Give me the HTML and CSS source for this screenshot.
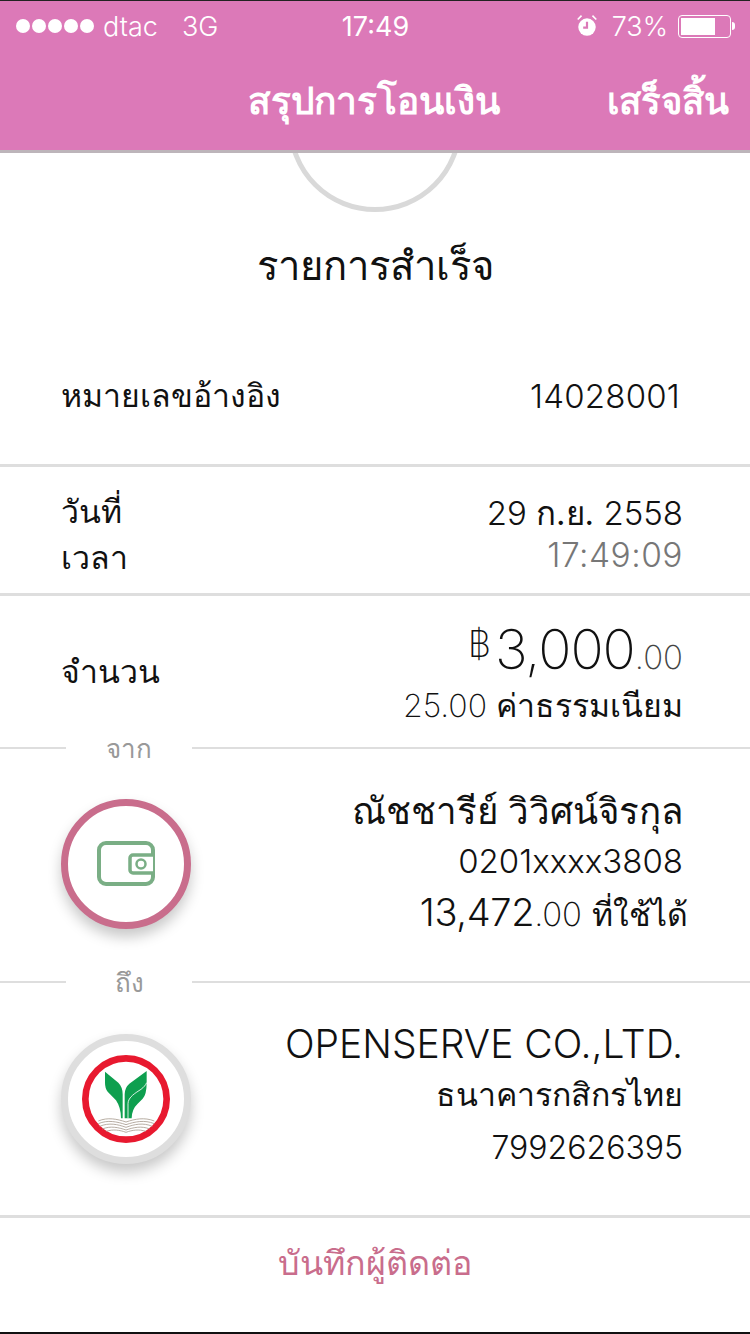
FILE: index.html
```html
<!DOCTYPE html>
<html lang="th">
<head>
<meta charset="utf-8">
<title>สรุปการโอนเงิน</title>
<link rel="stylesheet" href="styles.css">
</head>
<body>
<div class="screen">
  <header class="header">
    <div class="status">
      <div class="status-left">
        <span class="dots"><i></i><i></i><i></i><i></i><i></i></span>
        <span class="carrier">dtac</span>
        <span class="net">3G</span>
      </div>
      <div class="status-time">17:49</div>
      <div class="status-right">
        <svg class="alarm" width="22" height="24" viewBox="0 0 20 22"><circle cx="10" cy="12" r="8" fill="#fff"/><path d="M10 7v5.500H6.500" fill="none" stroke="#dc79b8" stroke-width="2"/><path d="M1.500 5 5 1.500M18.500 5 15 1.500" stroke="#fff" stroke-width="1.500"/></svg>
        <span class="pct">73%</span>
        <span class="battery"><span class="battery-fill"></span></span>
        <span class="battery-tip"></span>
      </div>
    </div>
    <div class="nav">
      <div class="nav-title">สรุปการโอนเงิน</div>
      <div class="nav-done">เสร็จสิ้น</div>
    </div>
  </header>
  <div class="arc-wrap"><div class="arc"></div></div>
  <h1 class="title">รายการสำเร็จ</h1>
  <section class="row row-ref">
    <div class="label">หมายเลขอ้างอิง</div>
    <div class="num">14028001</div>
  </section>
  <section class="row row-date">
    <div class="stack">
      <div class="label">วันที่</div>
      <div class="label">เวลา</div>
    </div>
    <div class="stack right">
      <div class="num date">29 <span class="thai">ก.ย.</span> 2558</div>
      <div class="num time">17:49:09</div>
    </div>
  </section>
  <section class="row row-amount">
    <div class="label">จำนวน</div>
    <div class="stack right">
      <div class="amount"><span class="baht">฿</span><span class="big">3,000</span><span class="cents">.00</span></div>
      <div class="fee"><span class="fee-num">25.00</span> ค่าธรรมเนียม</div>
    </div>
  </section>
  <div class="divider"><span class="line-l"></span><span class="div-label">จาก</span><span class="line-r"></span></div>
  <section class="party party-from">
    <div class="avatar avatar-pink">
      <svg width="60" height="48" viewBox="0 0 60 48"><rect x="3" y="3" width="54" height="41" rx="7" fill="none" stroke="#7aae85" stroke-width="4"/><path d="M57 15H37a3 3 0 0 0-3 3v12a3 3 0 0 0 3 3h20" fill="#fff" stroke="#7aae85" stroke-width="3.500"/><circle cx="45" cy="24" r="4.500" fill="none" stroke="#7aae85" stroke-width="2.500"/></svg>
    </div>
    <div class="info">
      <div class="name">ณัชชารีย์ วิวิศน์จิรกุล</div>
      <div class="line2">0201xxxx3808</div>
      <div class="line3">13,472<span class="small-cents">.00</span> <span class="avail">ที่ใช้ได้</span></div>
    </div>
  </section>
  <div class="divider"><span class="line-l"></span><span class="div-label">ถึง</span><span class="line-r"></span></div>
  <section class="party party-to">
    <div class="avatar avatar-gray">
      <svg width="88" height="88" viewBox="123 122 264 264">
        <circle cx="255" cy="254" r="122" fill="#fff" stroke="#e8192f" stroke-width="20"/>
        <path d="M192 172L232 205Q245 218 245 240V312H240Q240 280 225 258L200 232Q192 222 192 205Z" fill="#0e9f4f"/>
        <path d="M317 170L265 208Q251 220 251 240V312H272Q272 285 290 268L305 253Q317 240 317 205Z" fill="#0e9f4f"/>
        <path d="M261 312V268C261 248 285 235 300 225 308 219 314 212 317 205" fill="none" stroke="#fff" stroke-width="2.500"/>
        <g fill="none" stroke="#a89c90" stroke-width="2.500">
          <path d="M172 320c28-12 56-6 83 3 27-9 55-15 85-3"/>
          <path d="M172 328c28-12 56-6 83 3 27-9 55-15 85-3"/>
          <path d="M176 336c28-12 54-6 79 3 25-9 51-15 79-3"/>
          <path d="M184 344c24-10 48-5 71 3 23-8 47-13 71-3"/>
          <path d="M196 351c20-7 40-4 59 3 19-7 39-10 59-3"/>
        </g>
      </svg>
    </div>
    <div class="info">
      <div class="name-en">OPENSERVE CO.,LTD.</div>
      <div class="line2 bank">ธนาคารกสิกรไทย</div>
      <div class="line2 acct">7992626395</div>
    </div>
  </section>
  <footer class="footer">บันทึกผู้ติดต่อ</footer>
</div>
</body>
</html>
```

FILE: styles.css
```css
* { box-sizing: border-box; }
html, body { margin: 0; padding: 0; background: #fff; }
body { font-family: Inter, "Noto Sans", "Noto Sans CJK SC", sans-serif; color: #111; }
.screen { width: 750px; height: 1334px; overflow: hidden; display: flex; flex-direction: column; border-bottom: 2px solid #111; }

.header { height: 153px; flex: none; background: #dc79b8; border-top: 1px solid #222; border-bottom: 3px solid #bdb5ba; color: #fff; }
.status { display: flex; align-items: center; justify-content: space-between; height: 50px; padding: 0 15px 0 16px; font-size: 27px; font-weight: 300; }
.status-left { display: flex; align-items: center; width: 240px; }
.dots { display: flex; gap: 2px; }
.dots i { width: 14px; height: 14px; border-radius: 50%; background: #fff; display: block; }
.carrier { margin-left: 9px; }
.net { margin-left: 24px; }
.status-time { font-weight: 400; }
.status-right { display: flex; align-items: center; width: 240px; justify-content: flex-end; }
.pct { margin-left: 14px; }
.alarm { display: block; }
.battery { margin-left: 10px; width: 53px; height: 23px; border: 1.500px solid #fff; border-radius: 4px; padding: 2px; display: block; }
.battery-fill { display: block; width: 73%; height: 100%; background: #fff; }
.battery-tip { width: 3px; height: 8px; background: #fff; border-radius: 0 3px 3px 0; margin-left: 1px; }
.nav { display: flex; align-items: center; height: 99px; padding-right: 21px; }
.nav-title { margin-left: 248px; font-size: 37px; font-weight: 600; }
.nav-done { margin-left: auto; font-size: 36.500px; font-weight: 600; }

.arc-wrap { height: 59px; flex: none; overflow: hidden; display: flex; justify-content: center; align-items: flex-end; }
.arc { flex: none; width: 174px; height: 174px; border-radius: 50%; border: 5px solid #d9d9d9; }

.title { margin: 0; height: 116px; flex: none; padding-bottom: 8px; display: flex; align-items: center; justify-content: center; font-size: 40px; font-weight: 400; }

.row { display: flex; align-items: center; justify-content: space-between; flex: none; padding: 0 67px 0 61px; border-bottom: 3px solid #dedede; }
.row-ref { height: 139px; }
.row-date { height: 129px; padding-top: 10px; }
.row-amount { height: 138px; padding-top: 14px; border-bottom: 0; }
.label { font-size: 32px; line-height: 46px; font-weight: 400; }
.num { font-size: 33px; font-weight: 300; }
.row-ref .num { margin-right: 3px; letter-spacing: .2px; }
.stack { display: flex; flex-direction: column; }
.right { align-items: flex-end; }
.row-date .right { margin-top: -5px; }
.date { line-height: 44px; }
.thai { font-weight: 400; }
.time { line-height: 40px; color: #777; font-size: 33.500px; letter-spacing: .5px; }
.amount { display: flex; align-items: baseline; line-height: 66px; font-weight: 200; }
.baht { font-size: 36px; align-self: flex-start; margin-top: -5px; }
.big { font-size: 55px; margin-left: 4px; letter-spacing: -1px; }
.cents { font-size: 33px; color: #444; }
.fee { font-size: 32px; line-height: 46px; font-weight: 400; margin-top: -7px; }
.fee-num { font-weight: 200; }

.divider { display: flex; align-items: center; flex: none; height: 28px; }
.line-l { width: 66px; height: 2px; background: #dedede; }
.line-r { flex: 1; height: 2px; background: #dedede; }
.div-label { width: 126px; text-align: center; font-size: 26px; font-weight: 400; color: #999; }

.party { display: flex; justify-content: space-between; flex: none; height: 206px; padding-left: 61px; padding-right: 67px; }
.party-to { height: 219px; }
.avatar { width: 130px; height: 130px; flex: none; border-radius: 50%; display: flex; align-items: center; justify-content: center; background: #fff; box-shadow: 0 8px 14px rgba(0, 0, 0, .22); margin-top: 37px; }
.avatar-pink { border: 7px solid #c96d8c; }
.avatar-gray { border: 7px solid #dedede; margin-top: 38px; }
.info { display: flex; flex-direction: column; align-items: flex-end; }
.name { font-size: 36.700px; line-height: 50px; margin-top: 24px; font-weight: 400; }
.name-en { font-size: 39px; line-height: 50px; margin-top: 23px; font-weight: 300; }
.line2 { font-size: 33px; line-height: 51px; font-weight: 300; }
.bank { font-weight: 400; font-size: 32px; }
.acct { margin-top: 2px; font-size: 32px; }
.line3 { font-size: 38px; line-height: 50px; font-weight: 300; margin-right: -5px; letter-spacing: -.3px; }
.small-cents { font-size: 33px; font-weight: 200; }
.avail { font-size: 32px; font-weight: 400; letter-spacing: 0; }

.footer { border-top: 3px solid #dedede; flex: 1; padding-bottom: 25px; display: flex; align-items: center; justify-content: center; font-size: 34px; font-weight: 400; color: #c96d8c; }
```
